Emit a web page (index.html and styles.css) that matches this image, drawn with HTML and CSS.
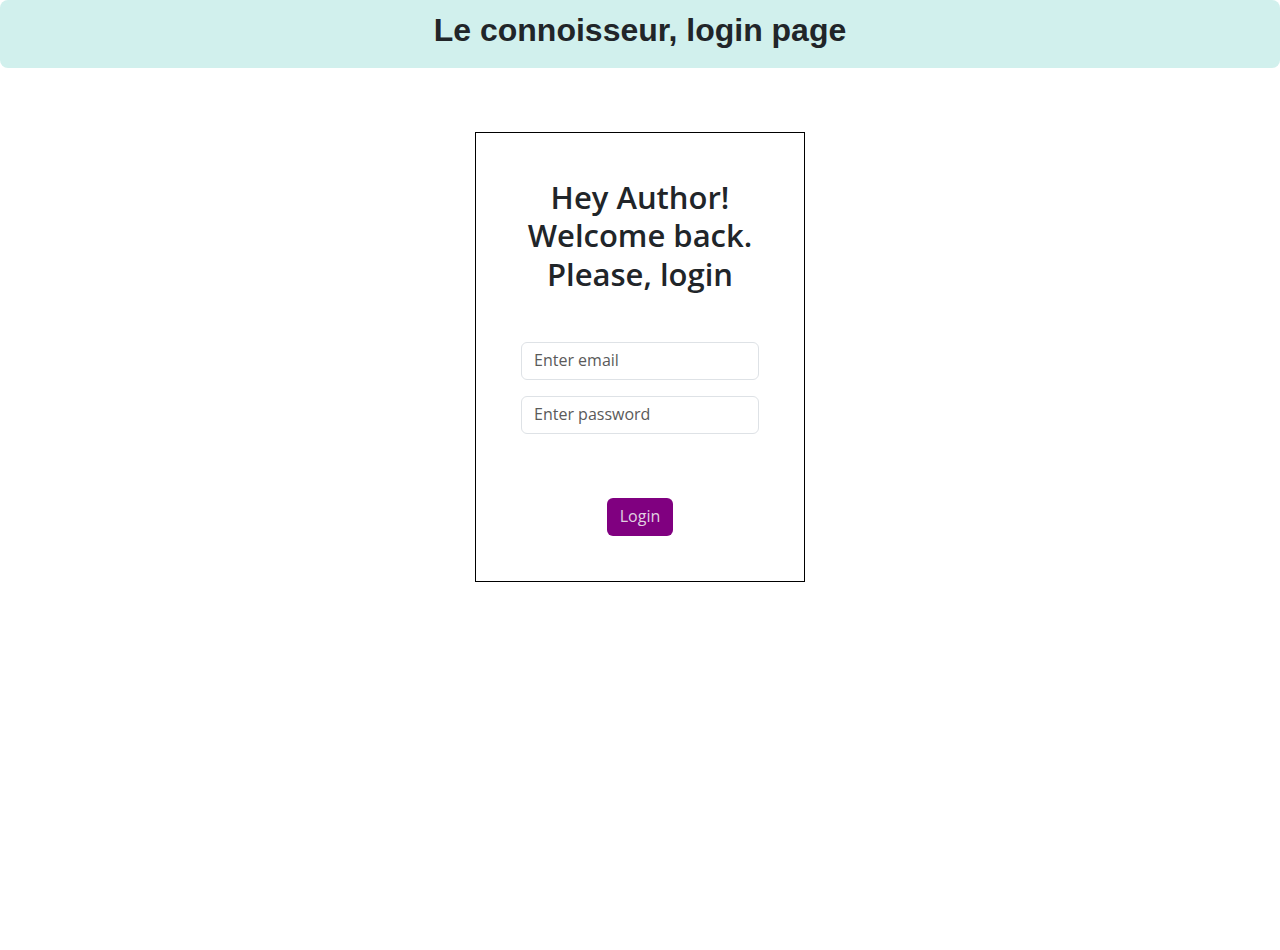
FILE: index.html
```html
<!DOCTYPE html>
<html lang="en">
<head>
<meta charset="utf-8">
<title>Le connoisseur, login page</title>
<link rel="stylesheet" href="styles.css">
</head>
<body>
<header class="topbar">
  <h1 class="topbar-title">Le connoisseur, login page</h1>
</header>
<main class="page">
  <form class="card">
    <h2 class="card-title">Hey Author!<br>Welcome back.<br>Please, login</h2>
    <div class="fields">
      <input class="field" type="email" placeholder="Enter email">
      <input class="field" type="password" placeholder="Enter password">
    </div>
    <button class="btn" type="button">Login</button>
  </form>
</main>
</body>
</html>
```
FILE: styles.css
```css
* { box-sizing: border-box; }
html, body { margin: 0; padding: 0; background: #fff; }
body {
  font-family: "Open Sans", "Noto Sans", sans-serif;
  color: #212529;
}
.topbar {
  height: 68px;
  background: #d1f0ed;
  border-radius: 8px;
  display: flex;
  justify-content: center;
}
.topbar-title {
  margin: 0;
  padding-top: 11px;
  font-family: "Liberation Sans", Arial, sans-serif;
  font-weight: bold;
  font-size: 32px;
  line-height: 38px;
  color: #212529;
}
.page {
  display: flex;
  justify-content: center;
  padding-top: 64px;
}
.card {
  width: 330px;
  border: 1px solid #000;
  padding: 45px 45px 45px;
  display: flex;
  flex-direction: column;
  align-items: center;
}
.card-title {
  margin: 0;
  font-weight: 600;
  font-size: 31px;
  line-height: 38.4px;
  text-align: center;
  color: #212529;
}
.fields {
  width: 100%;
  margin-top: 49px;
  display: flex;
  flex-direction: column;
  gap: 16px;
}
.field {
  width: 100%;
  height: 38px;
  padding: 5px 12px 7px;
  border: 1px solid #dee2e6;
  border-radius: 6px;
  font-family: inherit;
  font-size: 16px;
  color: #212529;
  background: #fff;
}
.field::placeholder { color: #5a5a5a; opacity: 1; }
.btn {
  margin-top: 64px;
  height: 38px;
  padding: 5px 13px 7px;
  border: 0;
  border-radius: 6px;
  background: #800080;
  color: #e0d0e0;
  font-family: inherit;
  font-size: 16px;
  line-height: 24px;
}
```
